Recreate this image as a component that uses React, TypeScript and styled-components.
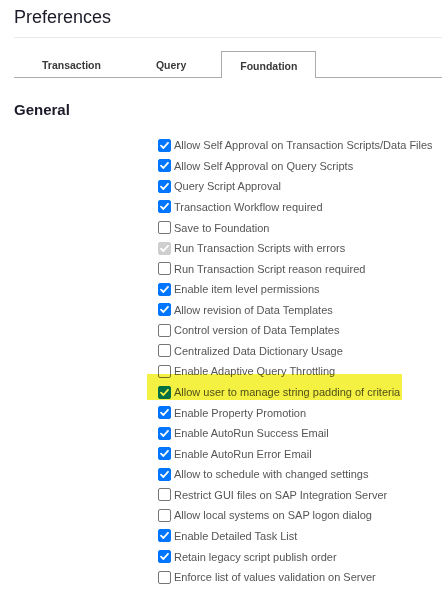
import React from "react";
import styled, { createGlobalStyle } from "styled-components";

const GlobalStyle = createGlobalStyle`
  body {
    margin: 0;
    background: #ffffff;
    font-family: "Liberation Sans", Arial, sans-serif;
  }
`;

type Option = {
  label: string;
  checked: boolean;
  disabled?: boolean;
  highlighted?: boolean;
};

const options: Option[] = [
  { label: "Allow Self Approval on Transaction Scripts/Data Files", checked: true },
  { label: "Allow Self Approval on Query Scripts", checked: true },
  { label: "Query Script Approval", checked: true },
  { label: "Transaction Workflow required", checked: true },
  { label: "Save to Foundation", checked: false },
  { label: "Run Transaction Scripts with errors", checked: true, disabled: true },
  { label: "Run Transaction Script reason required", checked: false },
  { label: "Enable item level permissions", checked: true },
  { label: "Allow revision of Data Templates", checked: true },
  { label: "Control version of Data Templates", checked: false },
  { label: "Centralized Data Dictionary Usage", checked: false },
  { label: "Enable Adaptive Query Throttling", checked: false },
  { label: "Allow user to manage string padding of criteria", checked: true, highlighted: true },
  { label: "Enable Property Promotion", checked: true },
  { label: "Enable AutoRun Success Email", checked: true },
  { label: "Enable AutoRun Error Email", checked: true },
  { label: "Allow to schedule with changed settings", checked: true },
  { label: "Restrict GUI files on SAP Integration Server", checked: false },
  { label: "Allow local systems on SAP logon dialog", checked: false },
  { label: "Enable Detailed Task List", checked: true },
  { label: "Retain legacy script publish order", checked: true },
  { label: "Enforce list of values validation on Server", checked: false },
];

const Page = styled.div`
  padding-left: 14px;
  overflow: hidden;
`;

const Title = styled.h1`
  margin: 0;
  padding: 6px 0 9px;
  font-size: 18px;
  line-height: 22px;
  font-weight: 400;
  color: #1b1b2a;
  border-bottom: 1px solid #e8e8e8;
`;

const TabBar = styled.div`
  display: flex;
  margin-top: 13px;
  height: 26px;
  border-bottom: 1px solid #ababab;
`;

const Tab = styled.div<{ $active?: boolean }>`
  display: flex;
  align-items: center;
  box-sizing: border-box;
  padding: ${(p) => (p.$active ? "1px 18px 0" : "0 26px 0 27px")};
  margin-left: ${(p) => (p.$active ? "8px" : "0")};
  height: ${(p) => (p.$active ? "27px" : "26px")};
  font-size: 10.5px;
  font-weight: 700;
  color: #3a3a3a;
  background: #fff;
  border: 1px solid ${(p) => (p.$active ? "#ababab" : "transparent")};
  border-bottom: none;
`;

const SectionTitle = styled.h2`
  margin: 23px 0 0;
  font-size: 15px;
  line-height: 18px;
  font-weight: 700;
  color: #1b1b2a;
`;

const List = styled.div`
  margin-top: 16px;
  padding-left: 144px;
  display: grid;
  grid-auto-rows: 20.57px;
`;

const Row = styled.label`
  position: relative;
  display: flex;
  align-items: center;
  gap: 3px;
  font-size: 11px;
  color: #555555;
  white-space: nowrap;
`;

const Highlight = styled.span`
  position: absolute;
  left: -11px;
  top: -8px;
  width: 255px;
  height: 26px;
  background: #f4f142;
  mix-blend-mode: multiply;
  pointer-events: none;
`;

const Box = styled.span<{ $checked: boolean; $disabled?: boolean }>`
  flex: none;
  width: 13px;
  height: 13px;
  box-sizing: border-box;
  border-radius: 2px;
  display: flex;
  align-items: center;
  justify-content: center;
  background: ${(p) =>
    p.$checked ? (p.$disabled ? "#cfcfcf" : "#0075ff") : "#ffffff"};
  border: 1px solid
    ${(p) => (p.$checked ? (p.$disabled ? "#cfcfcf" : "#0075ff") : "#767676")};
`;

const Check = () => (
  <svg width="11" height="11" viewBox="0 0 11 11">
    <path
      d="M2 5.6 L4.4 8 L9 2.8"
      fill="none"
      stroke="#ffffff"
      strokeWidth="1.8"
      strokeLinecap="round"
      strokeLinejoin="round"
    />
  </svg>
);

export default function App() {
  return (
    <Page>
      <GlobalStyle />
      <Title>Preferences</Title>
      <TabBar>
        <Tab>Transaction</Tab>
        <Tab>Query</Tab>
        <Tab $active>Foundation</Tab>
      </TabBar>
      <SectionTitle>General</SectionTitle>
      <List>
        {options.map((o) => (
          <Row key={o.label}>
            <Box $checked={o.checked} $disabled={o.disabled}>
              {o.checked && <Check />}
            </Box>
            {o.label}
            {o.highlighted && <Highlight />}
          </Row>
        ))}
      </List>
    </Page>
  );
}
